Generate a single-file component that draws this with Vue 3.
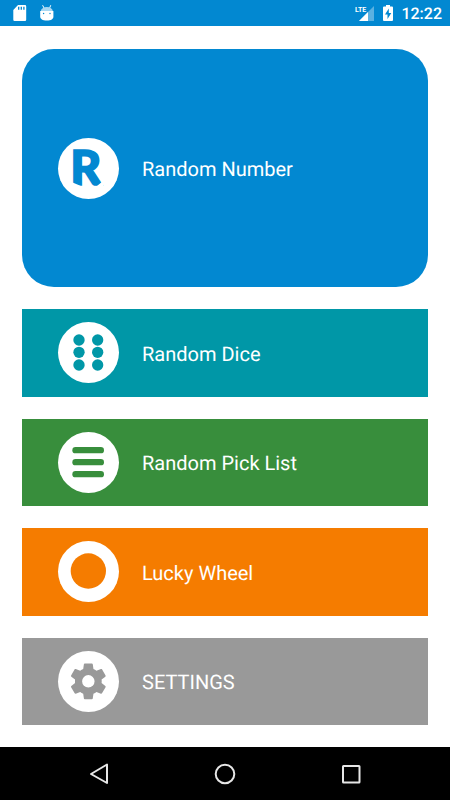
<script setup>
const items = [
  { id: 'number', label: 'Random Number' },
  { id: 'dice', label: 'Random Dice' },
  { id: 'list', label: 'Random Pick List' },
  { id: 'wheel', label: 'Lucky Wheel' },
  { id: 'settings', label: 'SETTINGS' }
]
</script>

<template>
  <div class="screen">
    <header class="status">
      <svg class="sd" width="14" height="16" viewBox="0 0 14 16" aria-hidden="true">
        <path fill="#fff" d="M5 0h7a1.200 1.200 0 0 1 1.200 1.200v13.600A1.200 1.200 0 0 1 12 16H1.500A1.200 1.200 0 0 1 .3 14.800V5z" />
        <path stroke="#0288d1" stroke-width="1.300" d="M5.700 1.800v3M8.300 1.800v3M10.900 1.800v3" />
      </svg>
      <svg class="droid" width="14" height="16" viewBox="0 0 14 16" aria-hidden="true">
        <path stroke="#fff" stroke-width="1" stroke-linecap="round" d="M2.800.6l1 2M10.600.6l-.8 2" />
        <path fill="#a9d8f2" d="M.6 6.500C1.200 3.500 3.300 2 6.800 2s5.600 1.500 6.200 4.500z" />
        <path fill="#fff" d="M.2 6h13.200v5.500c0 2.500-2.200 4-6.600 4s-6.600-1.500-6.600-4z" />
        <circle cx="3.600" cy="8.500" r=".7" fill="#0288d1" />
        <circle cx="10" cy="8.500" r=".7" fill="#0288d1" />
      </svg>
      <span class="spacer"></span>
      <svg class="signal" width="20" height="18" viewBox="0 0 20 18" aria-hidden="true">
        <path fill="#5bb1e1" d="M19 2v15H4z" />
        <path fill="#fff" d="M13 8v9H4z" />
        <path fill="#0288d1" d="M0 0h11v9H0z" />
        <text class="lte" x="0" y="8">LTE</text>
      </svg>
      <svg class="battery" width="10" height="16" viewBox="0 0 10 16" aria-hidden="true">
        <path fill="#fff" d="M3 0h4v1.500h2a1 1 0 0 1 1 1V15a1 1 0 0 1-1 1H1a1 1 0 0 1-1-1V2.500a1 1 0 0 1 1-1h2z" />
        <path fill="#0288d1" d="M5.800 3.500L2 9.500h2.500V14L8.300 8H5.800z" />
      </svg>
      <time class="clock">12:22</time>
    </header>

    <main class="menu">
      <button v-for="item in items" :key="item.id" type="button" class="tile" :class="item.id">
        <svg class="icon" viewBox="0 0 183 183" aria-hidden="true">
          <circle cx="91.500" cy="91.500" r="91.500" fill="#fff" />
          <template v-if="item.id === 'number'">
            <text class="letter" x="37" y="142">R</text>
            <path fill="#fff" d="M42 133l34 14v6H42zM136 128v22h-26l6-5z" />
          </template>
          <g v-else-if="item.id === 'dice'" fill="currentColor">
            <circle cx="63" cy="54" r="17" />
            <circle cx="119" cy="54" r="17" />
            <circle cx="63" cy="91" r="17" />
            <circle cx="119" cy="91" r="17" />
            <circle cx="63" cy="129" r="17" />
            <circle cx="119" cy="129" r="17" />
          </g>
          <g v-else-if="item.id === 'list'" fill="currentColor">
            <rect x="43" y="45" width="95" height="19" rx="9.500" />
            <rect x="43" y="81" width="95" height="19" rx="9.500" />
            <rect x="43" y="117" width="95" height="19" rx="9.500" />
          </g>
          <circle v-else-if="item.id === 'wheel'" cx="91" cy="90" r="53" fill="currentColor" />
          <path
            v-else
            transform="translate(26.800 26.800) scale(5.350)"
            fill="currentColor"
            d="M19.430 12.980c.04-.32.07-.64.07-.98s-.03-.66-.07-.98l2.110-1.650c.19-.15.24-.42.12-.64l-2-3.460c-.12-.22-.39-.3-.61-.22l-2.490 1c-.52-.4-1.080-.73-1.690-.98l-.38-2.650C14.460 2.180 14.250 2 14 2h-4c-.25 0-.46.18-.49.42l-.38 2.650c-.61.25-1.170.59-1.690.98l-2.490-1c-.23-.09-.49 0-.61.22l-2 3.460c-.13.22-.07.49.12.64l2.110 1.650c-.04.32-.07.65-.07.98s.03.66.07.98l-2.110 1.650c-.19.15-.24.42-.12.64l2 3.460c.12.22.39.3.61.22l2.490-1c.52.4 1.080.73 1.690.98l.38 2.650c.03.24.24.42.49.42h4c.25 0 .46-.18.49-.42l.38-2.650c.61-.25 1.170-.59 1.690-.98l2.490 1c.23.09.49 0 .61-.22l2-3.460c.12-.22.07-.49-.12-.64zM12 15.500A3.500 3.500 0 1 1 12 8.500a3.500 3.500 0 0 1 0 7z"
          />
        </svg>
        <span class="label">{{ item.label }}</span>
      </button>
    </main>

    <nav class="navbar">
      <button type="button" aria-label="Back">
        <svg width="24" height="24" viewBox="0 0 24 24">
          <path d="M20 2.500v18.500L4 12z" />
        </svg>
      </button>
      <button type="button" aria-label="Home">
        <svg width="24" height="24" viewBox="0 0 24 24">
          <circle cx="12" cy="12" r="9.300" />
        </svg>
      </button>
      <button type="button" aria-label="Recent apps">
        <svg width="24" height="24" viewBox="0 0 24 24">
          <rect x="4" y="4" width="16.500" height="16.500" rx=".5" />
        </svg>
      </button>
    </nav>
  </div>
</template>

<style>
body {
  margin: 0;
  background: #fff;
}
</style>

<style scoped>
.screen {
  min-height: 100vh;
  display: flex;
  flex-direction: column;
  font-family: Roboto, "Liberation Sans", sans-serif;
  text-rendering: geometricPrecision;
}

.status {
  box-sizing: border-box;
  height: 26px;
  padding: 0 8px 0 13px;
  display: flex;
  align-items: center;
  background: #0288d1;
  color: #fff;
}

.droid {
  margin-left: 13px;
}

.spacer {
  flex: 1;
}

.lte {
  font-family: Roboto, sans-serif;
  font-size: 7px;
  font-weight: 700;
  fill: #fff;
}

.battery {
  margin-left: 8px;
}

.clock {
  margin-left: 8px;
  padding-top: 2px;
  font-size: 16px;
  font-weight: 500;
  line-height: 24px;
}

.menu {
  flex: 1;
  display: flex;
  flex-direction: column;
  gap: 22px;
  padding: 23px 22px 22px;
}

.tile {
  flex: 1;
  display: flex;
  align-items: center;
  gap: 23px;
  min-height: 80px;
  padding: 0 36px;
  border: 0;
  font-family: inherit;
  text-align: left;
  text-rendering: inherit;
  cursor: pointer;
}

.icon {
  flex: none;
  width: 61px;
  height: 61px;
  overflow: visible;
}

.label {
  padding-top: 2px;
  font-size: 20px;
  line-height: 24px;
  color: #fff;
}

.letter {
  font-family: Lato, "Open Sans", sans-serif;
  font-size: 144px;
  font-weight: 900;
  fill: currentColor;
  stroke: currentColor;
  stroke-width: 5px;
}

.number {
  flex: 0 0 238px;
  border-radius: 32px;
  background: #0288d1;
  color: #0288d1;
}

.dice {
  background: #0097a7;
  color: #0097a7;
}

.list {
  background: #388e3c;
  color: #388e3c;
}

.wheel {
  background: #f57c00;
  color: #f57c00;
}

.settings {
  background: #999;
  color: #999;
}

.navbar {
  height: 53px;
  padding: 0 36px;
  display: grid;
  grid-template-columns: repeat(3, 1fr);
  background: #000;
}

.navbar button {
  display: flex;
  align-items: center;
  justify-content: center;
  padding: 0;
  border: 0;
  background: none;
}

.navbar svg {
  fill: none;
  stroke: #e6e6e6;
  stroke-width: 2;
  stroke-linejoin: round;
}
</style>
